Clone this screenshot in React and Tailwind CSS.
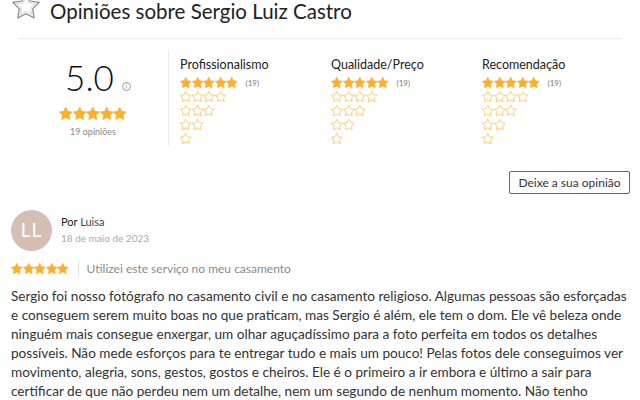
import React from 'react';

const STAR = 'M12 2l3.09 6.26L22 9.27l-5 4.87 1.18 6.88L12 17.77l-6.18 3.25L7 14.14 2 9.27l6.91-1.01L12 2z';

function Star({ size = 12, filled = true }) {
  return (
    <svg width={size} height={size} viewBox="1.5 1.5 21 21" className="shrink-0">
      {filled ? (
        <path d={STAR} fill="#fbb02c" stroke="#fbb02c" strokeWidth="1.2" strokeLinejoin="round" />
      ) : (
        <path d={STAR} fill="none" stroke="#f7c76a" strokeWidth="1.6" strokeLinejoin="round" />
      )}
    </svg>
  );
}

function Stars({ count, filled = true, size = 12 }) {
  return (
    <div className="flex">
      {Array.from({ length: count }).map((_, i) => (
        <Star key={i} size={size} filled={filled} />
      ))}
    </div>
  );
}

function Category({ title }) {
  return (
    <div className="w-[151px] pl-[11px]">
      <div className="text-[12.5px] text-[#222] leading-[16px]">{title}</div>
      <div className="mt-[4px] flex flex-col gap-[2px]">
        <div className="flex items-center h-[12px]">
          <Stars count={5} size={11.5} />
          <span className="ml-[8px] text-[8px] text-[#777]">(19)</span>
        </div>
        {[4, 3, 2, 1].map((n) => (
          <div key={n} className="h-[12px] flex items-center">
            <Stars count={n} filled={false} size={11.5} />
          </div>
        ))}
      </div>
    </div>
  );
}

export default function App() {
  return (
    <div className="w-[640px] h-[400px] overflow-hidden bg-white text-[#333]" style={{ fontFamily: 'Lato, "Open Sans", sans-serif' }}>
      {/* header */}
      <div className="flex items-center h-[28px] -mt-[3px] pl-[10px]">
        <svg width="32" height="32" viewBox="0 0 24 24" className="shrink-0 -mt-[10px]">
          <path d={STAR} fill="#f4f4f4" stroke="#8a8a8a" strokeWidth="0.9" strokeLinejoin="round" />
          <path d="M12 5.2l2.1 4.3 4.7.7-3.4 3.3.8 4.7L12 16l-4.2 2.2.8-4.7-3.4-3.3 4.7-.7z" fill="#ffffff" stroke="#cfcfcf" strokeWidth="0.6" strokeLinejoin="round" />
        </svg>
        <h1 className="ml-[8px] text-[20.5px] leading-[22px] text-[#222]">Opiniões sobre Sergio Luiz Castro</h1>
      </div>

      <div className="mx-[18px] mt-[13px] border-t border-[#ececec]" />

      {/* summary */}
      <div className="flex mx-[18px] mt-[11px]">
        <div className="w-[150px] flex flex-col items-center pt-[10px]">
          <div className="flex items-end pl-[10px]">
            <span className="text-[35px] font-light leading-[34px] text-[#111]">5.0</span>
            <span className="ml-[8px] mb-[3px] w-[9px] h-[9px] rounded-full border border-[#999] text-[7px] leading-[7px] text-[#999] flex items-center justify-center">i</span>
          </div>
          <div className="mt-[13px]">
            <Stars count={5} size={13.5} />
          </div>
          <div className="mt-[4px] text-[9px] text-[#888]">19 opiniões</div>
        </div>
        <div className="border-l border-[#ececec] h-[96px]" />
        <div className="flex pt-[7px]">
          <Category title="Profissionalismo" />
          <Category title="Qualidade/Preço" />
          <Category title="Recomendação" />
        </div>
      </div>

      <div className="flex justify-end pr-[10px] mt-[25px]">
        <button className="h-[23px] w-[121px] border border-[#666] rounded-[2px] text-[12px] text-[#333]">Deixe a sua opinião</button>
      </div>

      {/* review */}
      <div className="px-[11px] mt-[16px]">
        <div className="flex items-center">
          <div className="w-[41px] h-[41px] rounded-full bg-[#d5bfb4] flex items-center justify-center text-white text-[19px] tracking-[1px]">LL</div>
          <div className="ml-[9px] -mt-[2px]">
            <div className="text-[11px] leading-[14px] text-[#222]">Por <span className="text-[#444]">Luisa</span></div>
            <div className="mt-[3px] text-[10px] leading-[12px] text-[#aaa]">18 de maio de 2023</div>
          </div>
        </div>
        <div className="flex items-center mt-[9px]">
          <Stars count={5} size={11.5} />
          <div className="ml-[9px] h-[16px] border-l border-[#e2e2e2]" />
          <span className="ml-[8px] text-[12px] text-[#8a8a8a]">Utilizei este serviço no meu casamento</span>
        </div>
        <p className="mt-[9px] text-[13.6px] leading-[19px] text-[#333] whitespace-nowrap">
          Sergio foi nosso fotógrafo no casamento civil e no casamento religioso. Algumas pessoas são esforçadas<br />
          e conseguem serem muito boas no que praticam, mas Sergio é além, ele tem o dom. Ele vê beleza onde<br />
          ninguém mais consegue enxergar, um olhar aguçadíssimo para a foto perfeita em todos os detalhes<br />
          possíveis. Não mede esforços para te entregar tudo e mais um pouco! Pelas fotos dele conseguimos ver<br />
          movimento, alegria, sons, gestos, gostos e cheiros. Ele é o primeiro a ir embora e último a sair para<br />
          certificar de que não perdeu nem um detalhe, nem um segundo de nenhum momento. Não tenho
        </p>
      </div>
    </div>
  );
}
